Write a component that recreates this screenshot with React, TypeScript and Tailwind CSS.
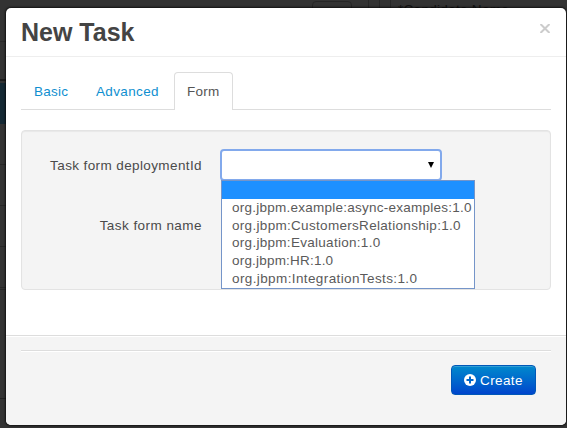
const OPTIONS = [
  { label: "org.jbpm.example:async-examples:1.0", tracking: "tracking-[0.25px]" },
  { label: "org.jbpm:CustomersRelationship:1.0", tracking: "tracking-[0.31px]" },
  { label: "org.jbpm:Evaluation:1.0", tracking: "tracking-[0.29px]" },
  { label: "org.jbpm:HR:1.0", tracking: "tracking-[0.2px]" },
  { label: "org.jbpm:IntegrationTests:1.0", tracking: "tracking-[0.39px]" },
];

function PageBehind() {
  return (
    <div className="flex h-full w-full justify-between bg-[#333333]">
      <div className="flex w-[6px] flex-col">
        <div className="h-[42px] border-b border-[#292929]" />
        <div className="h-[39px] border-b-2 border-[#1b1b1b]" />
        <div className="mt-[2px] h-[41px] bg-[#142833]" />
        <div className="h-[41px] border-b border-[#272727]" />
        <div className="h-[41px] border-b border-[#272727]" />
        <div className="h-[41px] border-b border-[#272727]" />
        <div className="h-[41px] border-b border-[#272727]" />
        <div className="h-[2px] border-b border-[#272727]" />
        <div className="h-[109px] border-b border-[#222222]" />
      </div>
      <div className="flex h-[30px] w-[255px]">
        <div className="mt-px h-[29px] w-[40px] rounded border border-[#262626]" />
        <div className="ml-[16px] w-[12px] border-x border-[#272727]" />
        <div className="ml-[10px] h-full border-l border-[#272727] pl-[7px] pt-px leading-[18px] tracking-[0.3px] text-[#111111]">
          *Candidate Name
        </div>
      </div>
    </div>
  );
}

export default function App() {
  return (
    <div className="relative h-[428px] w-[567px] overflow-hidden font-['Liberation_Sans',Arial,sans-serif] text-[13.5px] text-[#4a4a4a]">
      <PageBehind />
      <div className="absolute left-[6px] top-[8px] flex h-[417px] w-[560px] flex-col rounded-[5px] bg-white shadow-[0_0_2px_1px_rgba(0,0,0,0.65)]">
        <header className="flex h-[49px] shrink-0 justify-between border-b border-[#eeeeee] pl-[15px] pr-[16px]">
          <h3 className="mt-[4px] text-[25px] font-bold leading-[40px] text-[#444444]">New Task</h3>
          <button aria-label="Close" className="mt-[16px] h-[9px] w-[10px] text-[#cccccc]">
            <svg viewBox="0 0 10 9" className="h-[9px] w-[10px]" stroke="currentColor" strokeWidth="2">
              <path d="M.5 0 9.5 9M9.5 0 .5 9" />
            </svg>
          </button>
        </header>
        <main className="h-[278px] px-[15px] pt-[15px]">
          <nav className="flex h-[38px] border-b border-[#dddddd] leading-[40px] tracking-[0.25px] text-[#0f8fd0]">
            <a className="w-[62px] pl-[13px]">Basic</a>
            <a className="w-[91px] pl-[13px] tracking-[0.35px]">Advanced</a>
            <a className="h-[38px] w-[59px] rounded-t border border-b-0 border-[#dddddd] bg-white pl-[12px] leading-[38px] text-[#555555]">
              Form
            </a>
          </nav>
          <section className="mt-[20px] h-[160px] w-[530px] rounded border border-[#e3e3e3] bg-[#f4f4f4] pt-[18px] shadow-[inset_0_1px_1px_rgba(0,0,0,0.05)]">
            <div className="flex h-[60px]">
              <label className="w-[180px] pt-px text-right leading-[32px] tracking-[0.39px]">Task form deploymentId</label>
              <div className="relative ml-[18px] h-[31px] w-[222px]">
                <div className="flex h-[32px] items-center justify-end rounded-[4px] border-2 border-[#82a9ec] bg-white pr-[6px] text-black">
                  <svg viewBox="0 0 6 6" className="mb-px h-[6px] w-[6px]" fill="currentColor">
                    <path d="M0 0h6L3 6z" />
                  </svg>
                </div>
                <ul className="absolute left-[1px] top-[31px] h-[109px] w-[254px] border border-[#7595c9] bg-white leading-[17px] text-[#5a5a5a]">
                  <li className="h-[18px] bg-[#1e90ff]" />
                  {OPTIONS.map((option) => (
                    <li key={option.label} className={`h-[17.7px] whitespace-nowrap pl-[10px] ${option.tracking}`}>
                      {option.label}
                    </li>
                  ))}
                </ul>
              </div>
            </div>
            <label className="block w-[180px] pt-px text-right leading-[32px] tracking-[0.45px]">Task form name</label>
          </section>
        </main>
        <footer className="flex-1 rounded-b-[5px] border-t border-[#dddddd] bg-[#f4f4f4] px-[15px] pt-[14px] shadow-[inset_0_1px_0_#ffffff]">
          <hr className="h-[2px] border-b border-t border-b-white border-t-[#dddddd]" />
          <div className="mt-[13px] flex justify-end pr-[15px]">
            <button className="flex h-[30px] w-[85px] items-center rounded border border-[#0058b8] bg-linear-to-b from-[#0088cc] to-[#0044cc] pl-[12px] text-white shadow-[inset_0_1px_0_rgba(255,255,255,0.2)]">
              <svg viewBox="0 0 12 12" className="size-[12px]">
                <circle cx="6" cy="6" r="6" fill="#ffffff" />
                <path d="M6 2.5v7M2.5 6h7" stroke="#0066cc" strokeWidth="2" />
              </svg>
              <span className="ml-[4px] pt-[2px] tracking-[0.4px]">Create</span>
            </button>
          </div>
        </footer>
      </div>
    </div>
  );
}
